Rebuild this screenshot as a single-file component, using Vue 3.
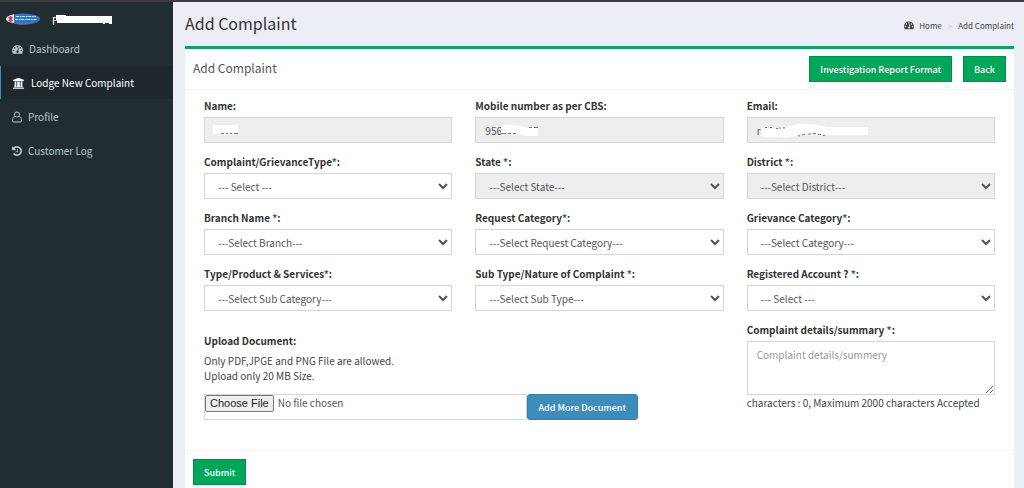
<script setup>
import { ref } from 'vue'

const gauge = 'M384 1152q0-53-37.5-90.5t-90.5-37.5-90.5 37.5-37.5 90.5 37.5 90.5 90.5 37.5 90.5-37.5 37.5-90.5zm192-448q0-53-37.5-90.5t-90.5-37.5-90.5 37.5-37.5 90.5 37.5 90.5 90.5 37.5 90.5-37.5 37.5-90.5zm428 481l101-382q6-26-7.5-48.5t-38.5-29.5-48 6.5-30 39.5l-101 382q-60 5-107 43.5t-63 98.5q-20 77 20 146t117 89 146-20 89-117q16-60-6-117t-72-91zm660-33q0-53-37.5-90.5t-90.5-37.5-90.5 37.5-37.5 90.5 37.5 90.5 90.5 37.5 90.5-37.5 37.5-90.5zm-640-640q0-53-37.5-90.5t-90.5-37.5-90.5 37.5-37.5 90.5 37.5 90.5 90.5 37.5 90.5-37.5 37.5-90.5zm448 192q0-53-37.5-90.5t-90.5-37.5-90.5 37.5-37.5 90.5 37.5 90.5 90.5 37.5 90.5-37.5 37.5-90.5zm320 448q0 261-141 483-19 29-54 29h-1402q-35 0-54-29-141-221-141-483 0-182 71-348t191-286 286-191 348-71 348 71 286 191 191 286 71 348z'
const history = 'M1664 896q0 156-61 298t-164 245-245 164-298 61q-172 0-327-72.5t-264-204.5q-7-10-6.5-22.5t8.5-20.5l137-138q10-9 25-9 16 2 23 12 73 95 179 147t225 52q104 0 198.5-40.5t163.5-109.5 109.5-163.5 40.5-198.5-40.5-198.5-109.5-163.5-163.5-109.5-198.5-40.5q-98 0-188 35.5t-160 101.5l137 138q31 30 14 69-17 40-59 40h-448q-26 0-45-19t-19-45v-448q0-42 40-59 39-17 69 14l130 129q107-101 244.5-156.5t284.5-55.5q156 0 298 61t245 164 164 245 61 298zm-640-288v448q0 14-9 23t-23 9h-320q-14 0-23-9t-9-23v-64q0-14 9-23t23-9h224v-352q0-14 9-23t23-9h64q14 0 23 9t9 23z'
const bank = 'M896 128l832 320v128h-128q0 26-20 45t-48 19H260q-28 0-48-19t-20-45H64V448zM320 704h256v704h128V704h384v704h-128 256V704h256v704h60q28 0 48 19t20 45v64H192v-64q0-26 20-45t48-19h60zM132 1600h1528q28 0 48 19t20 45v96H64v-96q0-26 20-45t48-19z'
const person = 'M896 128q-168 0-288 120t-120 300q0 150 80 280-360 90-376 560 0 150 90 235t220 85h788q130 0 220-85t90-235q-16-470-376-560 80-130 80-280 0-180-120-300T896 128zm0 128q120 0 204 88t84 204-84 212-204 96-204-96-84-212 84-204 204-88zM664 896q104 76 232 76t232-76q336 40 344 492 0 90-52 141t-130 51H502q-78 0-130-51t-52-141q8-452 344-492z'

const menu = [
  { label: 'Dashboard', icon: gauge, box: '0 0 1792 1792', size: 'mid' },
  { label: 'Lodge New Complaint', icon: bank, box: '0 0 1792 1792', size: 'wide', active: true },
  { label: 'Profile', icon: person, box: '180 100 1440 1640', size: 'slim' },
  { label: 'Customer Log', icon: history, box: '128 128 1536 1536', size: 'slim' },
]

const selects = [
  { id: 'type', label: 'Complaint/GrievanceType', option: '--- Select ---' },
  { id: 'state', label: 'State ', option: '---Select State---', disabled: true },
  { id: 'district', label: 'District ', option: '---Select District---', disabled: true },
  { id: 'branch', label: 'Branch Name ', option: '---Select Branch---' },
  { id: 'request', label: 'Request Category', option: '---Select Request Category---' },
  { id: 'category', label: 'Grievance Category', option: '---Select Category---' },
  { id: 'product', label: 'Type/Product & Services', option: '---Select Sub Category---' },
  { id: 'nature', label: 'Sub Type/Nature of Complaint ', option: '---Select Sub Type---' },
  { id: 'account', label: 'Registered Account ? ', option: '--- Select ---' },
]

const details = ref('')
</script>

<template>
  <div class="page">
    <aside class="sidebar">
      <div class="brand">
        <svg class="logo" viewBox="0 0 34 12" aria-hidden="true">
          <ellipse cx="17" cy="6" rx="17" ry="5.500" fill="#2f78bd" />
          <path d="M8 9.800q9 1.500 18 0l-3 1.200q-6 1-12 0z" fill="#d84a66" />
          <path d="M8 1.200v8.600Q0 9 0 6t8-4.800z" fill="#f1e9f0" />
          <path d="M2 4.500l2-1.500 3 1-1 2 1 2-3 1-2-1.500 1.500-1.500z" fill="#d43f55" />
          <path d="M10 3.500h20M9 6.500h22" stroke="#b9dcf6" stroke-width="1.200" stroke-dasharray="3 .6 2 .5" />
        </svg>
        <span class="user">F
          <svg class="user-mask" viewBox="0 0 56 10" aria-hidden="true">
            <path d="M0 0h10v1h46v8h-3v-1h-4v1h-2V8H1V5H0z" fill="#fff" />
          </svg>
        </span>
      </div>
      <nav>
        <a v-for="m in menu" :key="m.label" href="#" :class="{ active: m.active }">
          <svg :viewBox="m.box" :class="m.size" aria-hidden="true"><path :d="m.icon" fill="currentColor" /></svg>
          <span>{{ m.label }}</span>
        </a>
      </nav>
    </aside>

    <main class="content">
      <header class="page-head">
        <h1>Add Complaint</h1>
        <nav class="crumbs">
          <a href="#"><svg viewBox="0 0 1792 1792" aria-hidden="true"><path :d="gauge" fill="currentColor" /></svg>Home</a>
          <span class="sep">&gt;</span>
          <span>Add Complaint</span>
        </nav>
      </header>

      <section class="box">
        <div class="box-head">
          <h2>Add Complaint</h2>
          <button type="button" class="btn">Investigation Report Format</button>
          <button type="button" class="btn">Back</button>
        </div>

        <form id="complaint" class="fields" @submit.prevent>
          <div class="field">
            <label for="name">Name:</label>
            <div class="masked">
              <input id="name" type="text" disabled>
              <svg class="mask" viewBox="0 0 240 26" aria-hidden="true">
                <path d="M9 8h25v9H9z" fill="#fff" />
                <path d="M17 16.500h3m2 0h2m2 0h2m2 0h4" stroke="#777" />
              </svg>
            </div>
          </div>
          <div class="field">
            <label for="mobile">Mobile number as per CBS:</label>
            <div class="masked">
              <input id="mobile" type="text" value="956" disabled>
              <svg class="mask" viewBox="0 0 240 26" aria-hidden="true">
                <path d="M26 8q15-1 26 3h11v8H50q-5-3-24-3z" fill="#fff" />
                <path d="M27 16.500h4m2 0h3m2 0h3M54 10.500h3m2 0h4" stroke="#777" />
              </svg>
            </div>
          </div>
          <div class="field">
            <label for="email">Email:</label>
            <div class="masked">
              <input id="email" type="text" value="r" disabled>
              <svg class="mask" viewBox="0 0 240 26" aria-hidden="true">
                <path d="M14 11q10 1 24 0 6-4 20-4 14 0 22 3h41v8H80q-10-1-28 0-8 3-20 2-12 1-18-1z" fill="#fff" />
                <path d="M18 10.500h2m3 0h2m4 1h2m2-1v1.500m3-1h2M51 18.500l2 .5m2-1l3-1m3 0h3m2-.5h3m2 1h3m2 1h2" stroke="#777" fill="none" />
              </svg>
            </div>
          </div>

          <div v-for="s in selects" :key="s.id" class="field">
            <label :for="s.id">{{ s.label }}<span class="req">*</span>:</label>
            <select :id="s.id" :disabled="s.disabled"><option>{{ s.option }}</option></select>
          </div>

          <div class="upload">
            <label for="file">Upload Document:</label>
            <p>Only PDF,JPGE and PNG File are allowed.<br>Upload only 20 MB Size.</p>
            <div class="upload-row">
              <input id="file" type="file">
              <button type="button" class="btn more">Add More Document</button>
            </div>
          </div>
          <div class="field">
            <label for="details">Complaint details/summary <span class="req">*</span>:</label>
            <textarea id="details" v-model="details" placeholder="Complaint details/summery" maxlength="2000"></textarea>
            <span class="count">characters : {{ details.length }}, Maximum 2000 characters Accepted</span>
          </div>
        </form>

        <div class="box-foot">
          <button type="submit" form="complaint" class="btn">Submit</button>
        </div>
      </section>
    </main>
  </div>
</template>

<style>
body { background: #ecf0f5; }
</style>

<style scoped>
* { box-sizing: border-box; }

.page {
  display: flex;
  min-height: 100vh;
  border-top: 2px solid #3c3d40;
  background: #ebeef4;
  color: #444;
  font: 10px/15px "Noto Sans CJK SC", "Noto Sans", sans-serif;
}
a { color: inherit; text-decoration: none; }
h1, h2, p { margin: 0; font-weight: 400; }
input, select, textarea, button { font: inherit; }

.sidebar { flex: 0 0 173px; background: #222d32; color: #b8c7ce; }
.brand { display: flex; align-items: center; gap: 12px; height: 30px; padding: 4px 6px 0; }
.logo { width: 34px; height: 12px; }
.user { position: relative; padding-top: 2px; color: #fff; }
.user-mask { position: absolute; left: 4px; top: 4px; width: 56px; height: 10px; }
.sidebar nav { display: grid; gap: 1px; }
.sidebar nav a {
  display: flex;
  align-items: center;
  gap: 6px;
  height: 33px;
  padding-left: 11px;
  border-left: 1px solid transparent;
}
.sidebar nav svg { height: 12px; }
.sidebar nav .slim { width: 10px; }
.sidebar nav .mid { width: 11px; }
.sidebar nav .wide { width: 13px; }
.sidebar nav .active { border-left-color: #3c8dbc; background: #1e282c; color: #fff; }

.content { flex: 1; display: flex; flex-direction: column; min-width: 0; padding: 0 10px 0 12px; }
.page-head { display: flex; justify-content: space-between; align-items: center; height: 44px; }
h1 { padding-bottom: 3px; font-size: 16px; line-height: 24px; color: #333; }
.crumbs { display: flex; gap: 6px; padding-top: 2px; font-size: 8px; }
.crumbs a { display: flex; align-items: center; gap: 5px; }
.crumbs svg { width: 10px; height: 10px; }
.sep { color: #ccc; }

.box { flex: 1; border-top: 3px solid #12a164; background: #fff; }
.box-head {
  display: flex;
  align-items: center;
  gap: 11px;
  height: 41px;
  padding: 0 8px;
  border-bottom: 1px solid #f4f4f4;
}
h2 { margin-right: auto; padding-bottom: 3px; font-size: 12px; line-height: 20px; color: #555; }
.btn {
  height: 26px;
  padding: 0 10px;
  border: 1px solid #008d4c;
  background: #00a65a;
  color: #fff;
  font-size: 9px;
  font-weight: 500;
}

.fields {
  display: grid;
  grid-template-columns: repeat(3, 1fr);
  gap: 12px 23px;
  padding: 9px 19px 30px;
}
.field { display: flex; flex-direction: column; }
label { height: 18px; line-height: 14px; font-weight: 700; color: #333; }
.req { color: #1d7a2a; }
input, select, textarea {
  width: 100%;
  height: 26px;
  padding: 0 9px;
  border: 1px solid #d2d6de;
  border-radius: 0;
  background: #fff;
  color: #555;
}
select:disabled, input:disabled { background: #eee; color: #555; opacity: 1; }
.masked { position: relative; }
.masked input { display: block; }
.mask { position: absolute; left: 0; top: 0; width: 240px; height: 26px; }
textarea { height: 54px; padding: 5px 9px; resize: vertical; }
textarea::placeholder { color: #999; }

.upload { grid-column: span 2; padding-top: 11px; }
.upload label { display: block; margin-bottom: 1px; }
.upload-row { display: flex; width: 434px; max-width: 100%; margin-top: 11px; }
.upload-row input { flex: 1; min-width: 0; padding: 0; }
input::file-selector-button {
  height: 17px;
  margin: 0 4px 0 0;
  padding: 0 4px;
  border: 1px solid #767676;
  border-radius: 2px;
  background: #efefef;
  color: #222;
  font: 11px/15px "Liberation Sans", Arial, sans-serif;
}
.more { padding: 0 11px; border-color: #367fa9; border-radius: 3px; background: #3c8dbc; }
.box-foot { padding: 8px; border-top: 1px solid #f4f4f4; }
</style>
